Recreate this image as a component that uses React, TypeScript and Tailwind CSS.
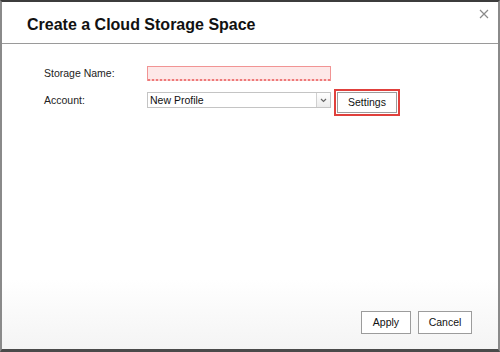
import React from 'react'

export default function App() {
    return (
        <div className="w-[500px] h-[352px] overflow-hidden bg-white" style={{ fontFamily: '"Liberation Sans", Arial, sans-serif' }}>
            <div className="w-full h-full flex flex-col border-l-2 border-r-2 border-t-2 border-b-[3px] border-l-[#8a8a8a] border-r-[#8a8a8a] border-t-[#3c3c3c] border-b-[#4a4a4a] bg-gradient-to-b from-white from-[80%] to-[#f4f4f4]">
                <div className="relative h-[42px] shrink-0 border-b border-[#9a9a9a] flex items-center pl-[25px] pt-[5px]">
                    <h1 className="text-[16px] font-bold text-[#111]">Create a Cloud Storage Space</h1>
                    <button className="absolute right-[7px] top-[5px] w-[14px] h-[14px] flex items-center justify-center">
                        <svg width="10" height="10" viewBox="0 0 10 10">
                            <path d="M1 1L9 9M9 1L1 9" stroke="#8a8a8a" strokeWidth="1.2" />
                        </svg>
                    </button>
                </div>
                <div className="flex flex-col pl-[42px] pt-[22px] text-[10.5px] text-[#222]">
                    <div className="flex items-center h-[15px]">
                        <span className="w-[103px]">Storage Name:</span>
                        <div className="w-[184px] h-[15px] flex flex-col bg-[#fde8e8] border border-b-0 border-[#f19494]">
                            <div className="flex-1" />
                            <div className="h-[2px] bg-[repeating-linear-gradient(90deg,#ee7a7a_0_2px,#fbd0d0_2px_4px)]" />
                        </div>
                    </div>
                    <div className="flex items-start mt-[8px]">
                        <span className="w-[103px] mt-[4px]">Account:</span>
                        <div className="w-[184px] h-[16px] mt-[3px] flex border border-[#c4c4c4] bg-white">
                            <span className="flex-1 pl-[2px] leading-[14px] text-[10.5px] text-[#111]">New Profile</span>
                            <div className="w-[14px] border-l border-[#d0d0d0] bg-gradient-to-b from-white to-[#ececec] flex items-center justify-center">
                                <svg width="7" height="5" viewBox="0 0 7 5">
                                    <path d="M1 1L3.5 3.5L6 1" stroke="#666" strokeWidth="1.2" fill="none" />
                                </svg>
                            </div>
                        </div>
                        <div className="ml-[3px] border-2 border-[#e0403c] p-[1px]">
                            <button className="w-[60px] h-[21px] border border-[#9c9c9c] bg-white text-[10.5px] text-[#111]">Settings</button>
                        </div>
                    </div>
                </div>
                <div className="mt-auto flex justify-end gap-[7px] pr-[26px] pb-[15px]">
                    <button className="w-[50px] h-[23px] border border-[#9c9c9c] bg-white text-[10.5px] text-[#111]">Apply</button>
                    <button className="w-[54px] h-[23px] border border-[#9c9c9c] bg-white text-[10.5px] text-[#111]">Cancel</button>
                </div>
            </div>
        </div>
    )
}
